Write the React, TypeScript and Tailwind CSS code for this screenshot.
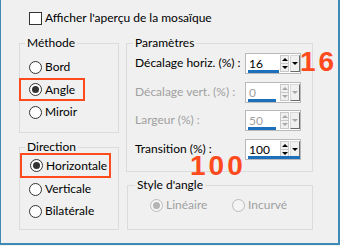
import React from "react";

function Radio({ checked, disabled }: { checked?: boolean; disabled?: boolean }) {
  return (
    <span
      className={
        disabled
          ? "flex w-[13px] h-[13px] shrink-0 items-center justify-center rounded-full border border-[#bcbcbc] bg-[#f4f4f4]"
          : "flex w-[13px] h-[13px] shrink-0 items-center justify-center rounded-full border border-[#333333] bg-white"
      }
    >
      {checked && (
        <span
          className={
            disabled
              ? "block w-[7px] h-[7px] rounded-full bg-[#b4b4b4]"
              : "block w-[7px] h-[7px] rounded-full bg-[#333333]"
          }
        />
      )}
    </span>
  );
}

function RadioRow({
  label,
  checked,
  disabled,
}: {
  label: string;
  checked?: boolean;
  disabled?: boolean;
}) {
  return (
    <div className="flex items-center gap-[3px] h-[22px] whitespace-nowrap">
      <Radio checked={checked} disabled={disabled} />
      <span className={disabled ? "text-[#a0a0a0]" : "text-black"}>{label}</span>
    </div>
  );
}

function Spin({
  value,
  disabled,
  bar,
}: {
  value: string;
  disabled?: boolean;
  bar: number;
}) {
  return (
    <div className="relative flex h-[21px] w-[56px] items-center border border-[#b9b9b9] bg-white">
      <span
        className={
          disabled
            ? "ml-[3px] w-[31px] text-[#a0a0a0] leading-[16px]"
            : "ml-[3px] w-[31px] text-black leading-[16px]"
        }
      >
        {value}
      </span>
      <div className="flex h-[17px] w-[9px] flex-col border border-[#c8c8c8] bg-[#f0f0f0]">
        <div className="flex h-[8px] items-center justify-center border-b border-[#c8c8c8]">
          <span
            className={
              disabled
                ? "block h-0 w-0 border-x-[3px] border-b-[3px] border-x-transparent border-b-[#a8a8a8]"
                : "block h-0 w-0 border-x-[3px] border-b-[3px] border-x-transparent border-b-black"
            }
          />
        </div>
        <div className="flex flex-1 items-center justify-center">
          <span
            className={
              disabled
                ? "block h-0 w-0 border-x-[3px] border-t-[3px] border-x-transparent border-t-[#a8a8a8]"
                : "block h-0 w-0 border-x-[3px] border-t-[3px] border-x-transparent border-t-black"
            }
          />
        </div>
      </div>
      <div className="ml-[1px] flex h-[17px] w-[10px] items-center justify-center border border-[#d8d8d8] border-r-[#6a6a6a] border-b-[#6a6a6a] bg-[#f0f0f0]">
        <span
          className={
            disabled
              ? "block h-0 w-0 border-x-[3px] border-t-[3px] border-x-transparent border-t-[#a8a8a8]"
              : "block h-0 w-0 border-x-[3px] border-t-[3px] border-x-transparent border-t-black"
          }
        />
      </div>
      <div
        className="absolute bottom-[0px] left-[2px] h-[3px] bg-[#1c6fbb]"
        style={{ width: bar }}
      />
    </div>
  );
}

export default function App() {
  return (
    <div
      className="relative w-[340px] h-[246px] overflow-hidden bg-[#f0f0f0] text-[12px] leading-[16px] text-black"
      style={{ fontFamily: 'Lato, "Liberation Sans", sans-serif' }}
    >
      <div className="h-[245px] w-[340px] border-l border-r-2 border-b-2 border-[#3d8ab5]">
        {/* checkbox row */}
        <div className="flex items-center gap-[3px] pl-[28px] pt-[10px] h-[26px] whitespace-nowrap">
          <span className="block h-[13px] w-[13px] border border-[#333333] bg-white" />
          <span>Afficher l'aperçu de la mosaïque</span>
        </div>

        <div className="mt-[9px] flex gap-[7px] pl-[18px]">
          {/* left column */}
          <div className="flex w-[100px] flex-col">
            <fieldset className="h-[98px] border border-[#dcdcdc]">
              <legend className="ml-[5px] px-[2px] leading-[16px]">Méthode</legend>
              <div className="flex flex-col pt-[5px]">
                <div className="pl-[9px]">
                  <RadioRow label="Bord" />
                </div>
                <div className="-ml-[1px] w-[66px] border-2 border-[#fe4a1c] pl-[8px] h-[23px] flex items-center">
                  <RadioRow label="Angle" checked />
                </div>
                <div className="pl-[9px]">
                  <RadioRow label="Miroir" />
                </div>
              </div>
            </fieldset>
            <fieldset className="mt-[6px] h-[91px] border border-[#dcdcdc]">
              <legend className="ml-[5px] px-[2px] leading-[16px]">Direction</legend>
              <div className="flex flex-col">
                <div className="-mt-[2px] w-[91px] h-[25px] border-2 border-[#fe4a1c] pl-[8px] flex items-center">
                  <RadioRow label="Horizontale" checked />
                </div>
                <div className="pl-[9px]">
                  <RadioRow label="Verticale" />
                </div>
                <div className="pl-[9px]">
                  <RadioRow label="Bilatérale" />
                </div>
              </div>
            </fieldset>
          </div>

          {/* right column */}
          <div className="flex w-[187px] flex-col">
            <fieldset className="h-[137px] border border-[#dcdcdc]">
              <legend className="ml-[6px] px-[2px] leading-[16px]">Paramètres</legend>
              <div className="flex flex-col pl-[8px] pt-[2px]">
                <div className="flex h-[21px] items-center">
                  <span className="w-[110px] -mt-[2px] whitespace-nowrap">Décalage horiz. (%) :</span>
                  <Spin value="16" bar={31} />
                </div>
                <div className="mt-[8px] flex h-[21px] items-center">
                  <span className="w-[110px] -mt-[2px] whitespace-nowrap text-[#a0a0a0]">Décalage vert. (%) :</span>
                  <Spin value="0" disabled bar={28} />
                </div>
                <div className="mt-[7px] flex h-[21px] items-center">
                  <span className="w-[110px] -mt-[2px] whitespace-nowrap text-[#a0a0a0]">Largeur (%) :</span>
                  <Spin value="50" disabled bar={28} />
                </div>
                <div className="mt-[8px] flex h-[21px] items-center">
                  <span className="w-[110px] -mt-[2px] whitespace-nowrap">Transition (%) :</span>
                  <Spin value="100" bar={52} />
                </div>
              </div>
            </fieldset>
            <fieldset className="mt-[5px] ml-[1px] h-[53px] border border-[#dcdcdc]">
              <legend className="ml-[7px] px-[2px] leading-[16px]">Style d'angle</legend>
              <div className="mt-[1px] flex pl-[22px]">
                <div className="w-[82px]">
                  <RadioRow label="Linéaire" checked disabled />
                </div>
                <RadioRow label="Incurvé" disabled />
              </div>
            </fieldset>
          </div>
        </div>
      </div>

      {/* annotations */}
      <span
        className="absolute left-[300px] top-[53px] text-[28px] font-bold leading-[18px] tracking-[3px] text-[#fe4a1c]"
        style={{ fontFamily: '"Liberation Sans", Arial, sans-serif' }}
      >
        16
      </span>
      <span
        className="absolute left-[190px] top-[157px] text-[28px] font-bold leading-[18px] tracking-[3px] text-[#fe4a1c]"
        style={{ fontFamily: '"Liberation Sans", Arial, sans-serif' }}
      >
        100
      </span>
    </div>
  );
}
